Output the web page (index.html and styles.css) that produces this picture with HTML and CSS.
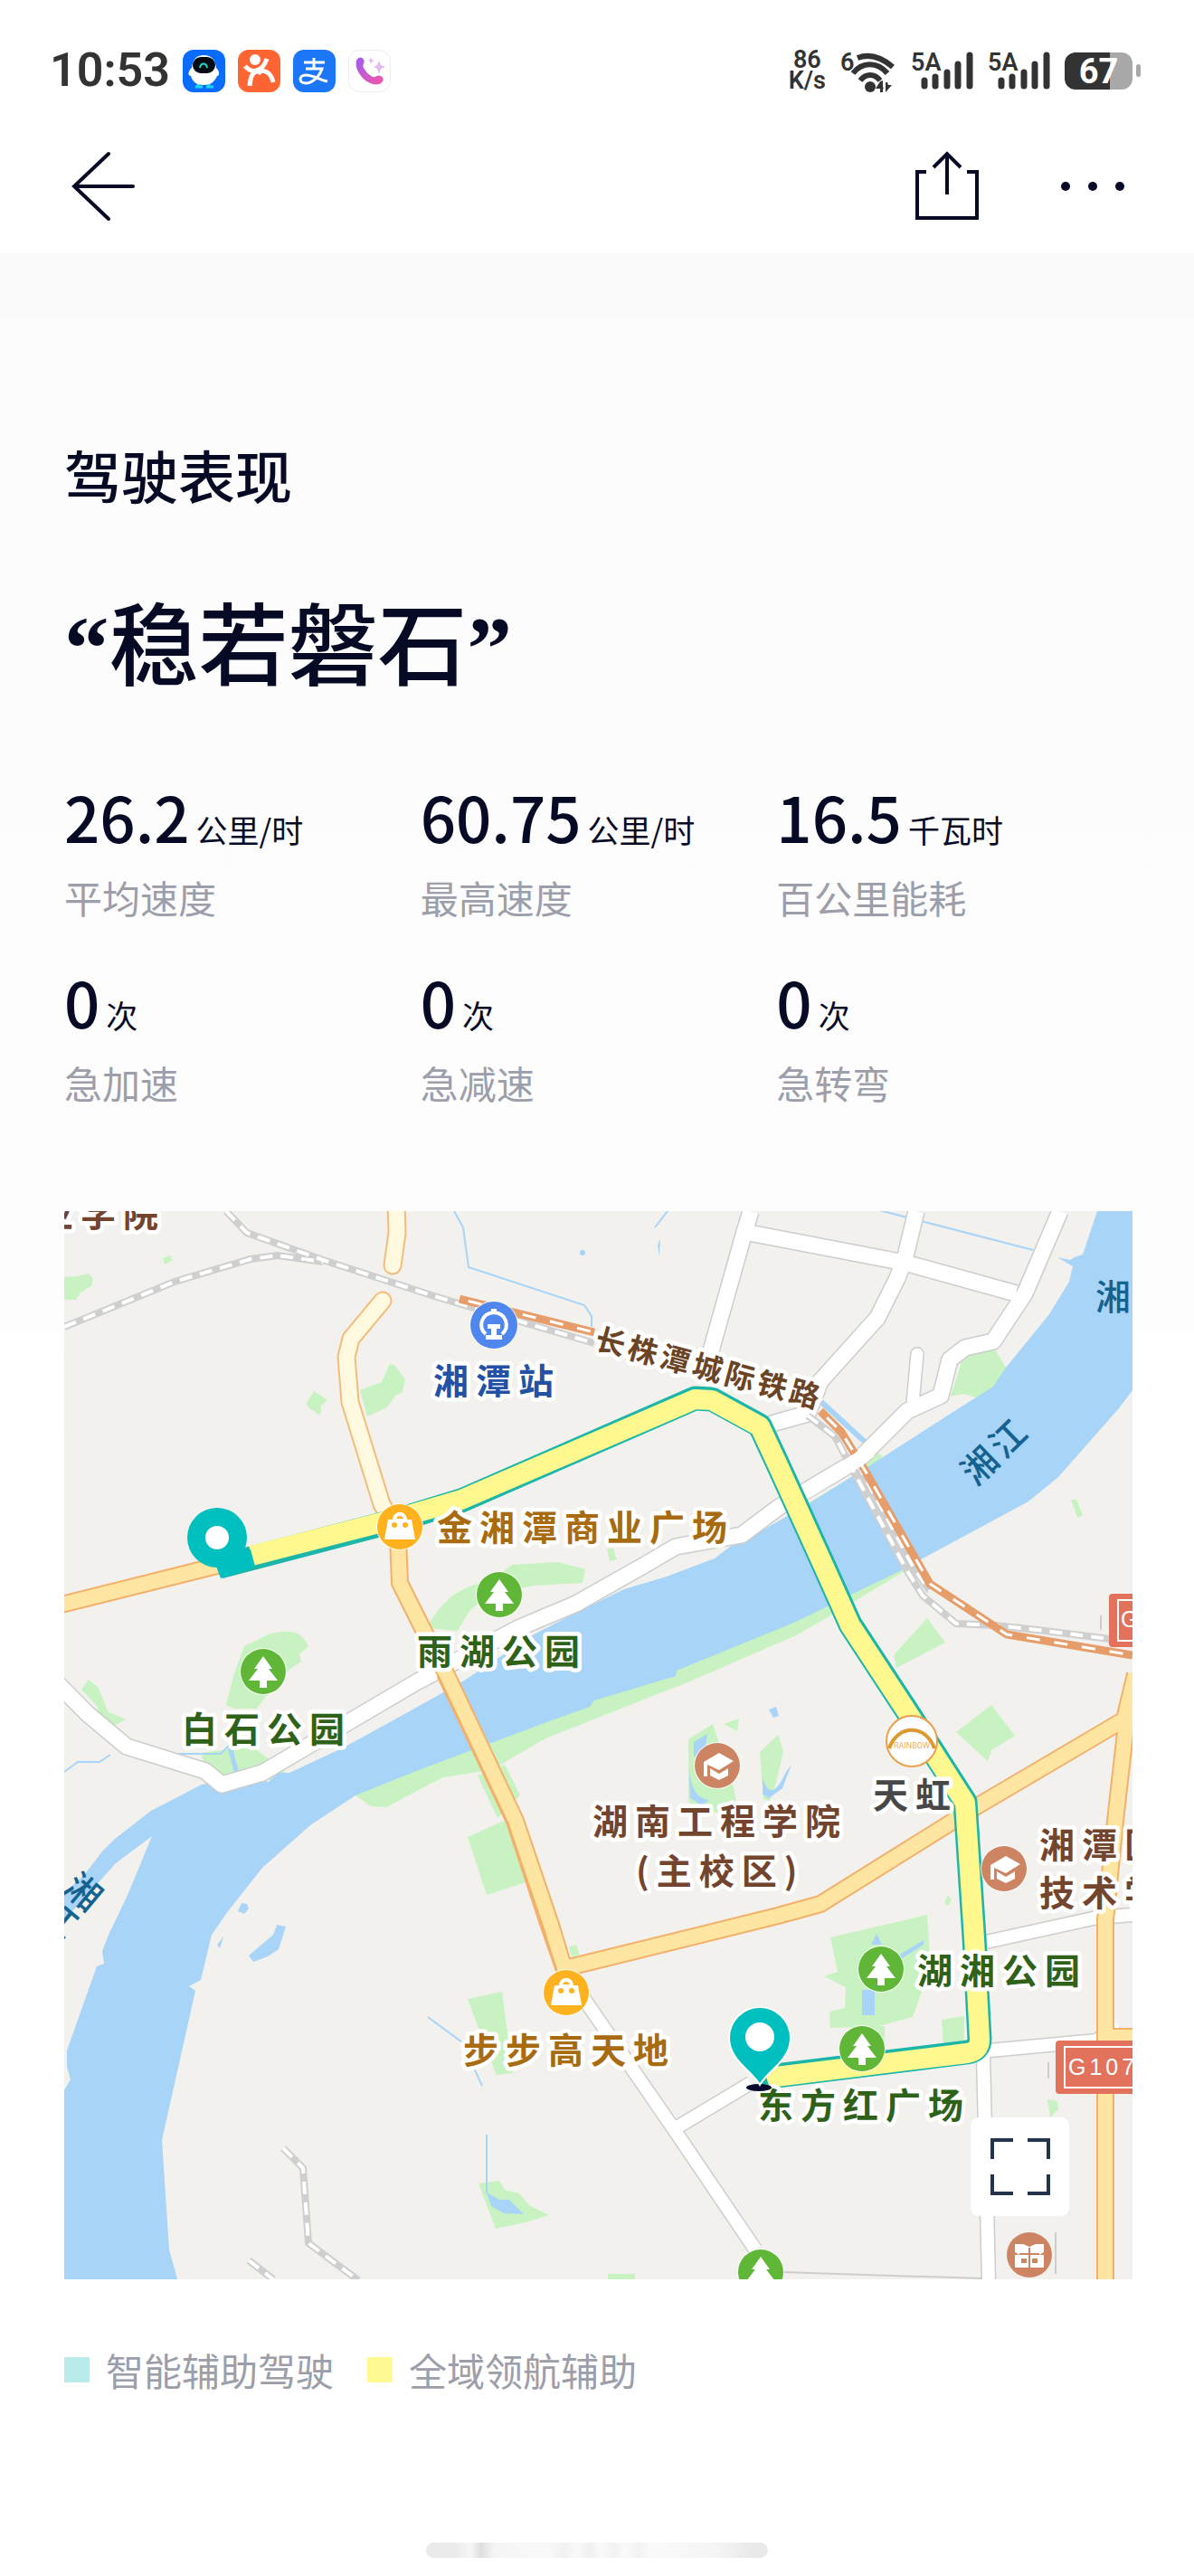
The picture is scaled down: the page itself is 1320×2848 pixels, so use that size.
FILE: index.html
```
<!DOCTYPE html>
<html lang="zh-CN">
<head>
    <meta charset="UTF-8">
    <meta name="viewport" content="width=device-width, initial-scale=1.0">
    <title>驾驶表现</title>
    <link rel="stylesheet" href="styles.css">
</head>
<body>
    <div class="status-bar">
        <div class="status-left">
            <span class="time">10:53</span>
            <svg class="app-icon" viewBox="0 0 47 47">
                <rect width="47" height="47" rx="12" fill="#0a6cff"/>
                <path d="M17 37v4M14 41h8M29 37v4M26 41h8" stroke="#1fd5e8" stroke-width="3"/>
                <path d="M23 6c9 0 13 5 14 14 4 4 4 9 1 9-3 7-8 10-15 10S11 36 9 29c-4 0-3-6 1-9 1-9 5-14 13-14z" fill="#fff"/>
                <rect x="11" y="8" width="25" height="18" rx="9" fill="#020b14"/>
                <path d="M19 20c1-6 7-6 8 0" fill="none" stroke="#24d6c4" stroke-width="2"/>
            </svg>
            <svg class="app-icon" viewBox="0 0 47 47">
                <rect width="47" height="47" rx="12" fill="#ff6433"/>
                <circle cx="19" cy="11" r="6" fill="#fff"/>
                <path d="M8 18c7 9 19 7 24-8M13 40c1-11 3-16 11-17 9 0 13 4 15 13M19 22l7 4" fill="none" stroke="#fff" stroke-width="5"/>
            </svg>
            <svg class="app-icon" viewBox="0 0 47 47">
                <rect width="47" height="47" rx="12" fill="#1c76f8"/>
                <path d="M12 14h23M23 9v11M14 21h18c-3 9-11 16-18 16-8 0-8-9 0-9 8 0 15 5 24 7" fill="none" stroke="#fff" stroke-width="3"/>
            </svg>
            <svg class="app-icon" viewBox="0 0 47 47">
                <defs>
                    <linearGradient id="call" x1="0" y1="0" x2="1" y2="1">
                        <stop offset="0" stop-color="#a05cf0"/>
                        <stop offset="1" stop-color="#f457a6"/>
                    </linearGradient>
                </defs>
                <rect x=".5" y=".5" width="46" height="46" rx="12" fill="#fff" stroke="#ececee"/>
                <path d="M9 12c2-5 7-4 8-1 2 4-2 5 0 9 3 5 6 8 10 10 4 1 5-3 9-1 5 3 2 8-2 9C21 41 6 24 9 12z" fill="url(#call)"/>
                <path d="M34 12l2 5 5 2-5 2-2 6-2-6-4-2 4-2zM25 8l1 3 3 1-3 1-1 3-1-3-2-1 2-1z" fill="#e3b8f5"/>
            </svg>
        </div>
        <div class="status-right">
            <span class="speed">86<br>K/s</span>
            <svg class="wifi-icon" viewBox="0 -6 62 59">
                <text class="status-text" x="0" y="23">6</text>
                <g fill="none" stroke="#333" stroke-width="6">
                    <path d="M19 9c13-5 26-1 39 10"/>
                    <path d="M14 26c10-13 27-13 38 0"/>
                    <path d="M22 34c6-8 16-8 22 0"/>
                </g>
                <circle cx="33" cy="41" r="6" fill="#333"/>
                <path d="M44 35v12h3V34zM44 35l-5 8h9zM50 36v11l7-8h-4l-1-3z" fill="#333"/>
            </svg>
            <svg class="signal-icon" viewBox="0 -6 69 59">
                <text class="status-text" x="0" y="23">5A</text>
                <path d="M15 34v6M27 30v10M40 25v15M52 16v24M65 6v34" stroke="#333" stroke-width="7" stroke-linecap="round"/>
            </svg>
            <svg class="signal-icon" viewBox="0 -6 69 59">
                <text class="status-text" x="0" y="23">5A</text>
                <path d="M15 34v6M27 30v10M40 25v15M52 16v24M65 6v34" stroke="#333" stroke-width="7" stroke-linecap="round"/>
            </svg>
            <div class="battery"><span class="battery-body">67</span></div>
        </div>
    </div>

    <header class="nav-bar">
        <button class="icon-button" aria-label="返回">
            <svg width="70" height="78" viewBox="0 0 70 78" fill="none" stroke="#060a24" stroke-width="4" stroke-linecap="round">
                <path d="M41 3L3 39l38 36M3 39h65"/>
            </svg>
        </button>
        <div class="nav-actions">
            <button class="icon-button" aria-label="分享">
                <svg width="70" height="78" viewBox="0 0 70 78" fill="none" stroke="#060a24" stroke-width="4">
                    <path d="M12 23H2v51h66V23H57M35 3v45M20 18L35 3l15 15"/>
                </svg>
            </button>
            <button class="icon-button" aria-label="更多">
                <svg width="72" height="12" viewBox="0 0 72 12" fill="#060a24">
                    <circle cx="6" cy="6" r="5"/>
                    <circle cx="36" cy="6" r="5"/>
                    <circle cx="66" cy="6" r="5"/>
                </svg>
            </button>
        </div>
    </header>

    <main class="content">
        <h1>驾驶表现</h1>
        <p class="rating"><span class="quote">“</span>稳若磐石<span class="quote">”</span></p>

        <dl class="stats">
            <div class="stat"><dt>平均速度</dt><dd>26.2<span class="unit">公里/时</span></dd></div>
            <div class="stat"><dt>最高速度</dt><dd>60.75<span class="unit">公里/时</span></dd></div>
            <div class="stat"><dt>百公里能耗</dt><dd>16.5<span class="unit">千瓦时</span></dd></div>
            <div class="stat"><dt>急加速</dt><dd>0<span class="unit">次</span></dd></div>
            <div class="stat"><dt>急减速</dt><dd>0<span class="unit">次</span></dd></div>
            <div class="stat"><dt>急转弯</dt><dd>0<span class="unit">次</span></dd></div>
        </dl>

        <div class="map">
            <svg class="map-canvas" viewBox="71 1339 1181 1181">
                <defs>
                    <g id="tree">
                        <circle r="26" fill="#fff" opacity=".8"/>
                        <circle r="25" fill="#60b636"/>
                        <path d="M0-17L10-3H6l10 13H4v8h-8v-8h-12L-6-3h-4z" fill="#fff"/>
                    </g>
                    <g id="bag">
                        <circle r="26" fill="#fff" opacity=".8"/>
                        <circle r="25" fill="#ffb21e"/>
                        <path d="M-13-8h5c1-11 15-11 16 0h5l4 22h-34z" fill="#fff"/>
                        <path d="M-4-9c1-4 7-4 8 0z" fill="#ffb21e"/>
                        <circle cx="-6" cy="-2" r="3" fill="#ffb21e"/>
                        <circle cx="6" cy="-2" r="3" fill="#ffb21e"/>
                    </g>
                    <g id="school">
                        <circle r="26" fill="#fff" opacity=".8"/>
                        <circle r="25" fill="#cd8463"/>
                        <path d="M-15-4L2-14l16 9L2 5l-13-6v13h-4zM-8 3L2 9l10-6v8L2 16l-10-5z" fill="#fff"/>
                    </g>
                </defs>

                <rect x="71" y="1339" width="1181" height="1181" fill="#f2f1ed"/>

                <!-- parks -->
                <g fill="#c8f2c1">
                    <path d="M71 1412l15-1 12-3 5 6-2 8-13 8-4 7h-13zM180 1391l8-3 3 5-9 5zM339 1551l8-13 15 10-7 6-1 11-14-10zM398 1537l24-9 9-20 6 2 11 15-3 14-8 4-9 13-22 10z"/>
                    <path d="M250 1885l8-32 12-33 27-13c30-8 37 0 44 13l-10 9 2 8-12 8-20 20-17 24-25 0zM90 1868l8-11 10 8 12 28 19 8-31 16v-30z"/>
                    <path d="M222 1938l40-5 20 0 35 28-10 9-40-8-29 5-10-9z"/>
                    <path d="M472 1800c15-30 37-47 70-52l24-18 51-3 30 8-3 15-53 3-52 10-20 18-13 22z"/>
                    <path d="M671 1712l7 0 4 12-8 2zM1051 1544l15-48 33-6 13 22-12 22-22 11-12-4zM1184 1658l6 0 7 17-6 3z"/>
                    <path d="M393 1985L410 1997 427 1998 480 1970 490 1965 543 1957 603 1922 760 1860 880 1808 917 1787 1000 1737 980 1730 760 1820 480 1940z"/>
                    <path d="M890 1664l50-30 30-28 6 4-35 37-50 28zM988 1830l37-41 20 27-54 28zM1057 1915l39-30 26 34-26 16-4 12-6-5z"/>
                    <path d="M528 1963l30-12 17 34-25 25zM517 2031l42-19 26 68-47 15z"/>
                    <path d="M761 1923l27-17 23 70 4 20-32 11-22-15zM800 1906l17-6-2 14zM840 1937l20-19 6 18-8 35-7 20-7-2z"/>
                    <path d="M517 2210l38-8 8 62 4 28-18 2-12-30zM629 2153l8-3 4 11-9 3zM529 2414l23-3 6 10 16 4 11 13 22 11-26 8-33 7z"/>
                    <path d="M918 2142l107-25 4 65-10 20-10 28-38 10-53 2-1-18 17-4 1-23-24-12 15-5zM1041 2233l25-4v27l-23 4zM940 2240h38v24h-38zM1158 2321l11 2 1 9-9 9zM1044 2104l4-9 4 6-4 6z"/>
                    <path d="M672 2514h30v7h-30z"/>
                </g>

                <!-- river -->
                <path fill="#a7d4f7" d="M1213 1339L1197 1387 1188 1390 1183 1393 1169 1390 1186 1400 1182 1417 1160 1453 1112 1512 1098 1533 1060 1557 973 1613 893 1663 860 1682 820 1705 807 1710 790 1723 737 1743 690 1757 643 1780 590 1807 513 1858 460 1888 380 1932 320 1960 307 1960 297 1970 265 1963 260 1967 223 1973 167 2002 127 2033 113 2047 93 2073 71 2093V2123L110 2080 128 2060 168 2030 142 2093 115 2150 124 2130 113 2157 115 2171 107 2174 74 2267 74 2285 78 2299 71 2311V2520H196L187 2487 179 2366 216 2201 209 2196 222 2189 234 2139 252 2113 290 2065 343 2018 393 1985 460 1958 543 1927 610 1902 652 1887 657 1880 747 1853 748 1847 880 1793 943 1762 1003 1733 1022 1722 1137 1660 1170 1633 1237 1557 1252 1537V1339z"/>
                <g fill="#a7d4f7">
                    <path d="M263 2113l4-9 6 1 2 5-5 6zM306 2128l10 2-4 12-4 8-8-4zM275 2162l26-22 8-10 6 3-7 22-12 8-16 6zM240 2150l7-9-4 13z"/>
                    <path d="M538 2424l14 8 11 0 16 16-22-1-14-8zM953 2200h14v28h-14zM963 2150l6-12 6 12zM985 2167l36-22v5l-27 17zM762 1960c4 22 10 28 22 30l-8 6-13-8zM767 1926l15-9-3 20-12 6zM843 1965c6 20 14 20 26-6l6-8-10 26-15 11-7-4zM850 1890l8-3 3 10-6 2zM727 1377l3-8-1 20z"/>
                    <circle cx="644" cy="1385" r="3"/>
                </g>
                <g fill="none" stroke="#a7d4f7" stroke-width="2">
                    <path d="M502 1339l10 18 6 44 128 42 8 12v12M738 1339l-14 18M972 1338l170 44M71 1959l15-11h24l12-8M167 1949l12-10h65l12-12 5 40M473 2230l38 28 22 48M538 2360v65"/>
                </g>
                <path d="M908 1550l48 44" stroke="#a7d4f7" stroke-width="6"/>
                <path d="M254 1932l10 36" stroke="#a7d4f7" stroke-width="5"/>

                <!-- local roads -->
                <g fill="none" stroke-linejoin="round">
                    <g stroke="#cdcdcd" stroke-width="20">
                        <path d="M823 1362l177 34 123 34" />
                        <path d="M830 1339l-7 23-36 128-4 16M1013 1339l-13 54-8 20-22 44-63 70-14 36-33 9-12 4"/>
                        <path d="M1172 1339l-39 91-35 53-31 7-17 13-10 40-37 17-53 53-57 34-33 20-40 30-73 13-34 20-76 43-64 27-113 60-170 100-45 13-18-15-87-27-43-36-79-80"/>
                        <path d="M1014 1497l-5 55" stroke-width="16" stroke-linecap="round"/>
                        <path d="M1090 2147l123-27 39-3M1083 2268l130-12 20-20M830 2303l-85 51M625 2180l120 174 90 133M1087 2272l6 250" stroke-width="17"/>
                    </g>
                    <g stroke="#fff" stroke-width="17">
                        <path d="M823 1362l177 34 123 34" />
                        <path d="M830 1339l-7 23-36 128-4 16M1013 1339l-13 54-8 20-22 44-63 70-14 36-33 9-12 4"/>
                        <path d="M1172 1339l-39 91-35 53-31 7-17 13-10 40-37 17-53 53-57 34-33 20-40 30-73 13-34 20-76 43-64 27-113 60-170 100-45 13-18-15-87-27-43-36-79-80"/>
                        <path d="M1014 1497l-5 55" stroke-width="13" stroke-linecap="round"/>
                        <path d="M1090 2147l123-27 39-3M1083 2268l130-12 20-20M830 2303l-85 51M625 2180l120 174 90 133M1087 2272l6 250" stroke-width="14"/>
                    </g>
                    <path d="M866 2512l90 3 130 4M1159 2280v18M1167 2468v46M1217 1786v16" stroke="#cdcdcd" stroke-width="2"/>
                </g>

                <!-- railways -->
                <g fill="none">
                    <path stroke="#cfcfcf" stroke-width="8" d="M250 1339l23 24 84 30 123 40 177 52M71 1467l122-50 84-25 30-4 50 7M893 1565l30 23 17 32 63 117 17 27 37 31 43 2 47 5 80 10M948 1618l63 117 17 24M313 2375l22 22 6 83 55 41M275 2499l27 21"/>
                    <path stroke="#fff" stroke-width="4" stroke-dasharray="14 9" d="M250 1339l23 24 84 30 123 40 177 52M71 1467l122-50 84-25 30-4 50 7M893 1565l30 23 17 32 63 117 17 27 37 31 43 2 47 5 80 10M948 1618l63 117 17 24M313 2375l22 22 6 83 55 41M275 2499l27 21"/>
                    <path stroke="#e79d69" stroke-width="9" d="M508 1436l149 37M907 1560l23 23 27 44 71 124 85 56 139 23"/>
                    <path stroke="#fff" stroke-width="3" stroke-dasharray="15 16" stroke-dashoffset="-10" d="M508 1436l149 37M907 1560l23 23 27 44 71 124 85 56 139 23"/>
                </g>
                <path d="M890 1650l60-37 12-10" fill="none" stroke="#fff" stroke-width="16"/>

                <!-- main roads -->
                <g fill="none" stroke-linejoin="round">
                    <g stroke="#f3bc7a" stroke-width="21" stroke-linecap="round">
                        <path d="M438 1330l1 33-5 36M423 1438l-35 42-5 20 4 50 35 113 18 30"/>
                    </g>
                    <g stroke="#fffadf" stroke-width="17" stroke-linecap="round">
                        <path d="M438 1330l1 33-5 36M423 1438l-35 42-5 20 4 50 35 113 18 30"/>
                    </g>
                    <g stroke="#f3b06a" stroke-width="20">
                        <path d="M60 1776l180-45 40-11M440 1700l2 50 26 52 25 48 77 163 40 118 15 50M625 2176l235-58 47-13 173-108 163-96 12-50M1248 1880l-15 133-11 110v400M1229 2252h30"/>
                    </g>
                    <g stroke="#fee6a2" stroke-width="16">
                        <path d="M60 1776l180-45 40-11M440 1700l2 50 26 52 25 48 77 163 40 118 15 50M625 2176l235-58 47-13 173-108 163-96 12-50M1248 1880l-15 133-11 110v400M1229 2252h30"/>
                    </g>
                    <path d="M484 1853l77 163 36 110 18 52" stroke="#f3b06a" stroke-width="3"/>
                </g>

                <!-- driven route -->
                <g fill="none" stroke-linejoin="round">
                    <path d="M243 1732l195-51 72-22 258-113 19 1 53 29 20 43 50 110 30 67 63 96 64 100 10 150 6 112q0 13-14 15l-211 26-20 5" stroke="#1bb5a9" stroke-width="27"/>
                    <path d="M278 1720l160-41 72-21 258-111 19 1 53 29 20 43 50 110 30 67 63 96 64 100 10 150 6 112q0 13-14 15l-211 26-10 3" stroke="#fff88f" stroke-width="22"/>
                    <path d="M236 1724l41-11 5 19-38 13z" fill="#00bfbf"/>
                </g>

                <!-- places -->
                <use href="#bag" x="442" y="1688"/>
                <use href="#bag" x="626" y="2203"/>
                <use href="#tree" x="291" y="1848"/>
                <use href="#tree" x="552" y="1763"/>
                <use href="#tree" x="974" y="2177"/>
                <use href="#tree" x="953" y="2265"/>
                <use href="#tree" x="841" y="2512"/>
                <use href="#school" x="793" y="1952"/>
                <use href="#school" x="1110" y="2066"/>
                <g transform="translate(546 1465)">
                    <circle r="27" fill="#fff" opacity=".8"/>
                    <circle r="26" fill="#4f87ef"/>
                    <path d="M-9 10C-18 2-14-13 0-14 14-13 18 2 9 10" fill="none" stroke="#fff" stroke-width="4"/>
                    <path d="M-3-18h6v5h-6zM-7-1H7v5H3v7h6v5H-9v-5h6V4h-4z" fill="#fff"/>
                </g>
                <g transform="translate(1138 2493)">
                    <circle r="25" fill="#cd8463"/>
                    <path d="M-16-12h9l7 3 7-3h9v9l-5 3h5v14h-32V0h5l-5-3z" fill="#fff"/>
                    <path d="M-9 4h6v5h-6zM3 4h6v5H3z" fill="#cd8463"/>
                    <path d="M-11-1H11M0-8v22" stroke="#cd8463" stroke-width="2"/>
                </g>
                <g transform="translate(1008 1925)">
                    <circle r="28" fill="#fff" stroke="#eaa04c" stroke-width="2"/>
                    <path d="M-25 8C-16-19 16-19 25 8" fill="none" stroke="#dd9a33" stroke-width="4"/>
                    <text class="logo-text" x="0" y="8">RAINBOW</text>
                </g>

                <!-- road shields -->
                <rect x="1167" y="2256" width="100" height="59" rx="4" fill="#e2725b"/>
                <path d="M1260 2263h-83v45h83" fill="none" stroke="#fff" stroke-width="2"/>
                <text class="shield-text" x="1181" y="2294">G107</text>
                <rect x="1226" y="1762" width="60" height="59" rx="4" fill="#e2725b"/>
                <path d="M1260 1769h-24v45h24" fill="none" stroke="#fff" stroke-width="2"/>
                <text class="shield-text" x="1239" y="1799">G107</text>

                <!-- labels -->
                <g class="map-label">
                    <text class="school" x="42" y="1356">业学院</text>
                    <text class="station" x="479" y="1541">湘潭站</text>
                    <text class="mall" x="483" y="1703">金湘潭商业广场</text>
                    <text class="park" x="461" y="1840">雨湖公园</text>
                    <text class="park" x="201" y="1926">白石公园</text>
                    <text class="school" x="655" y="2028">湖南工程学院</text>
                    <text class="school" x="703" y="2083">(主校区)</text>
                    <text class="shop" x="965" y="1999">天虹</text>
                    <text class="school" x="1149" y="2054">湘潭医</text>
                    <text class="school" x="1149" y="2107">技术学</text>
                    <text class="park" x="1014" y="2193">湖湘公园</text>
                    <text class="mall" x="512" y="2281">步步高天地</text>
                    <text class="park" x="838" y="2342">东方红广场</text>
                    <text class="rail" x="656" y="1491" transform="rotate(15 656 1491)">长株潭城际铁路</text>
                </g>
                <g class="river-label">
                    <text x="1211" y="1448">湘</text>
                    <text x="1079" y="1644" transform="rotate(-44 1079 1644)">湘江</text>
                    <text x="68" y="2090" transform="rotate(40 68 2090)">湘</text>
                    <text x="42" y="2120" transform="rotate(40 42 2120)">江</text>
                </g>

                <!-- trip start and end -->
                <circle cx="240" cy="1700" r="33" fill="#00bfbf"/>
                <circle cx="240" cy="1700" r="13" fill="#fff"/>
                <ellipse cx="839" cy="2308" rx="14" ry="4" fill="#060a2c"/>
                <path d="M840 2305c-9-16-34-27-34-52a34 34 0 0 1 68 0c0 25-25 36-34 52z" fill="#00bfbf" stroke="#fff" stroke-width="2"/>
                <circle cx="840" cy="2252" r="16" fill="#fff"/>
            </svg>
            <button class="expand-button" aria-label="全屏">
                <svg width="66" height="66" viewBox="0 0 66 66" fill="none" stroke="#24344c" stroke-width="4">
                    <path d="M2 24V3h23M41 3h23v21M64 41v21H41M25 62H2V41"/>
                </svg>
            </button>
        </div>

        <ul class="legend">
            <li><span class="swatch assist"></span>智能辅助驾驶</li>
            <li><span class="swatch navigate"></span>全域领航辅助</li>
        </ul>
    </main>

    <div class="home-indicator"></div>
</body>
</html>
```
FILE: styles.css
```
* {
    box-sizing: border-box;
}

body {
    margin: 0;
    min-height: 100vh;
    display: flex;
    flex-direction: column;
    background-color: #fff;
    color: #060a24;
    font-family: "Noto Sans CJK SC", sans-serif;
}

h1, p, dl, dd, ul {
    margin: 0;
    padding: 0;
}

svg {
    display: block;
}

/* status bar */
.status-bar {
    display: flex;
    justify-content: space-between;
    align-items: center;
    height: 132px;
    padding: 24px 59px 0 55px;
    color: #333;
}

.status-left {
    display: flex;
    align-items: center;
    gap: 14px;
}

.time {
    font-family: Roboto, sans-serif;
    font-size: 52px;
    font-weight: 600;
    line-height: 60px;
}

.app-icon {
    width: 47px;
    height: 47px;
}

.status-right {
    display: flex;
    align-items: center;
    gap: 16px;
}

.speed {
    font-family: Roboto, sans-serif;
    font-size: 27px;
    font-weight: 600;
    line-height: 23px;
    text-align: center;
}

.wifi-icon {
    width: 62px;
    height: 59px;
}

.signal-icon {
    width: 69px;
    height: 59px;
}

.status-text {
    font-family: Roboto, sans-serif;
    font-size: 27px;
    font-weight: 600;
    fill: #333;
}

.battery {
    display: flex;
    align-items: center;
    gap: 4px;
}

.battery::after {
    content: "";
    width: 5px;
    height: 14px;
    border-radius: 3px;
    background-color: #a8a8a8;
}

.battery-body {
    width: 75px;
    height: 41px;
    border-radius: 12px;
    background: linear-gradient(to right, #333 67%, #a8a8a8 67%);
    color: #fff;
    font-family: Roboto, sans-serif;
    font-size: 38px;
    font-weight: 700;
    line-height: 42px;
    text-align: center;
}

/* top navigation */
.nav-bar {
    display: flex;
    justify-content: space-between;
    align-items: center;
    height: 148px;
    padding: 0 76px 0 79px;
}

.nav-actions {
    display: flex;
    align-items: center;
    gap: 90px;
}

.icon-button {
    padding: 0;
    border: none;
    background: none;
    cursor: pointer;
}

/* trip summary */
.content {
    padding: 207px 68px 0 71px;
    background: linear-gradient(#fafafb, #fcfcfd 120px, #fdfdfe 1100px, #fff 1300px);
}

h1 {
    font-size: 63px;
    font-weight: 500;
    line-height: 74px;
}

.rating {
    margin-top: 91px;
    font-size: 99px;
    font-weight: 500;
    line-height: 110px;
}

.quote {
    font-family: "Liberation Serif", serif;
    font-weight: 700;
    line-height: 1;
}

.stats {
    display: grid;
    grid-template-columns: repeat(3, 1fr);
    row-gap: 36px;
    margin-top: 88px;
}

.stat {
    display: flex;
    flex-direction: column-reverse;
    gap: 11px;
    white-space: nowrap;
}

.stat dd {
    font-size: 69px;
    font-weight: 500;
    line-height: 96px;
}

.unit {
    margin-left: 7px;
    font-size: 35px;
    font-weight: 400;
    line-height: 1;
}

.stat dt {
    color: #9c9ea9;
    font-size: 42px;
    line-height: 62px;
}

/* map */
.map {
    position: relative;
    margin-top: 111px;
}

.map-canvas {
    width: 100%;
    height: auto;
}

.map-label {
    font-size: 39px;
    font-weight: 700;
    letter-spacing: 8px;
    stroke: #fff;
    stroke-width: 9px;
    stroke-linejoin: round;
    paint-order: stroke;
}

.park {
    fill: #2f6219;
}

.mall {
    fill: #a96b10;
}

.school {
    fill: #74452e;
}

.station {
    fill: #2351a5;
}

.shop {
    fill: #474747;
}

.rail {
    fill: #6b4426;
    font-size: 33px;
    letter-spacing: 4px;
}

.river-label {
    fill: #14628f;
    font-size: 39px;
    font-weight: 500;
    letter-spacing: 4px;
}

.shield-text {
    fill: #fff;
    font-family: "Liberation Sans", sans-serif;
    font-size: 25px;
    letter-spacing: 4px;
}

.logo-text {
    fill: #e8b06a;
    font-family: Roboto, sans-serif;
    font-size: 9px;
    text-anchor: middle;
}

.expand-button {
    position: absolute;
    right: 70px;
    bottom: 70px;
    display: flex;
    align-items: center;
    justify-content: center;
    width: 109px;
    height: 109px;
    padding: 0;
    border: none;
    border-radius: 9px;
    background-color: #fff;
    cursor: pointer;
}

.legend {
    display: flex;
    gap: 37px;
    margin-top: 69px;
    list-style: none;
    color: #9c9ea9;
    font-size: 42px;
    line-height: 62px;
}

.legend li {
    display: flex;
    align-items: center;
    gap: 18px;
}

.swatch {
    width: 28px;
    height: 28px;
}

.assist {
    background-color: #b8ebe9;
}

.navigate {
    background-color: #fff993;
}

.home-indicator {
    width: 378px;
    height: 17px;
    margin: auto auto 20px;
    border-radius: 9px;
    background: linear-gradient(to right, #e9e9e9, #ececec 9%, #f7f7f7 13%, #dedede 16%, #f5f5f5 20%, #f9f9f9 36%, #f1f1f1 40%, #f9f9f9 44%, #f0f0f0 48%, #fafafa 51%, #f2f2f2 55%, #fafafa 58%, #f2f2f2 62%, #fafafa 66%, #f4f4f4 86%, #e9e9e9 95%);
}
```
